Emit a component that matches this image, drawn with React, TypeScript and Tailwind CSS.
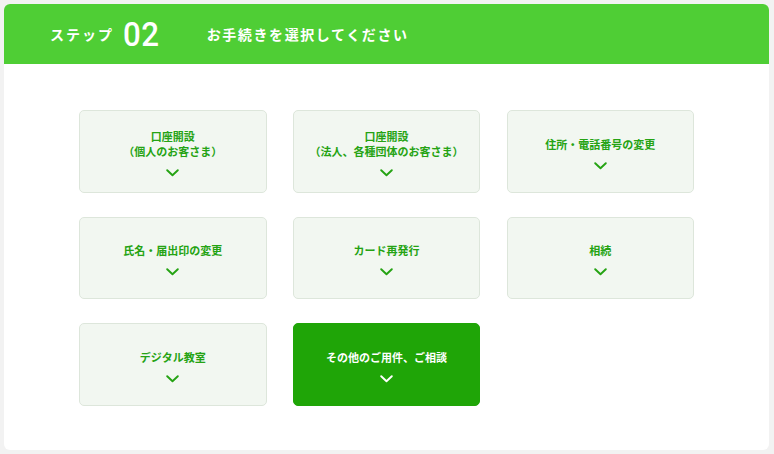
import React from "react";

const items: { lines: string[]; active?: boolean }[] = [
  { lines: ["口座開設", "（個人のお客さま）"] },
  { lines: ["口座開設", "（法人、各種団体のお客さま）"] },
  { lines: ["住所・電話番号の変更"] },
  { lines: ["氏名・届出印の変更"] },
  { lines: ["カード再発行"] },
  { lines: ["相続"] },
  { lines: ["デジタル教室"] },
  { lines: ["その他のご用件、ご相談"], active: true },
];

function Chevron({ color }: { color: string }) {
  return (
    <svg width="13" height="8" viewBox="0 0 13 8" fill="none">
      <path d="M1.2 1.2 L6.5 6.3 L11.8 1.2" stroke={color} strokeWidth="1.9" strokeLinecap="round" strokeLinejoin="round" />
    </svg>
  );
}

export default function App() {
  return (
    <div
      className="w-[774px] h-[454px] bg-[#f2f2f2] p-[4px] pr-[5px]"
      style={{ fontFamily: '"Noto Sans CJK JP", "Noto Sans", sans-serif' }}
    >
      <div className="h-[446px] bg-white rounded-[6px] overflow-hidden flex flex-col">
        <div className="h-[60px] bg-[#4fce35] flex items-center pl-[46px] text-white font-bold">
          <span className="text-[14px] tracking-[2px] leading-none">ステップ</span>
          <span
            className="ml-[9px] text-[34px] leading-none font-medium tracking-[0.5px] inline-block scale-x-[0.92] origin-left"
            style={{ fontFamily: 'Roboto, "Liberation Sans", sans-serif' }}
          >
            02
          </span>
          <span className="ml-[44px] text-[14px] tracking-[1.6px] leading-none">お手続きを選択してください</span>
        </div>
        <div className="flex-1 flex justify-center pt-[46px]">
          <div className="grid grid-cols-[187.5px_187.5px_187.5px] gap-x-[26.25px] gap-y-[24px] content-start">
            {items.map((it, i) => (
              <div
                key={i}
                className={
                  "h-[82.5px] rounded-[5px] border flex flex-col items-center justify-center pt-[4px] " +
                  (it.active
                    ? "bg-[#1fa507] border-[#1fa507] text-white"
                    : "bg-[#f2f7f1] border-[#dde6db] text-[#25a313]")
                }
              >
                <div className="text-[11px] font-bold leading-[15px] text-center">
                  {it.lines.map((l, j) => (
                    <div key={j}>{l}</div>
                  ))}
                </div>
                <div className="mt-[10px]">
                  <Chevron color={it.active ? "#ffffff" : "#25a313"} />
                </div>
              </div>
            ))}
          </div>
        </div>
      </div>
    </div>
  );
}
